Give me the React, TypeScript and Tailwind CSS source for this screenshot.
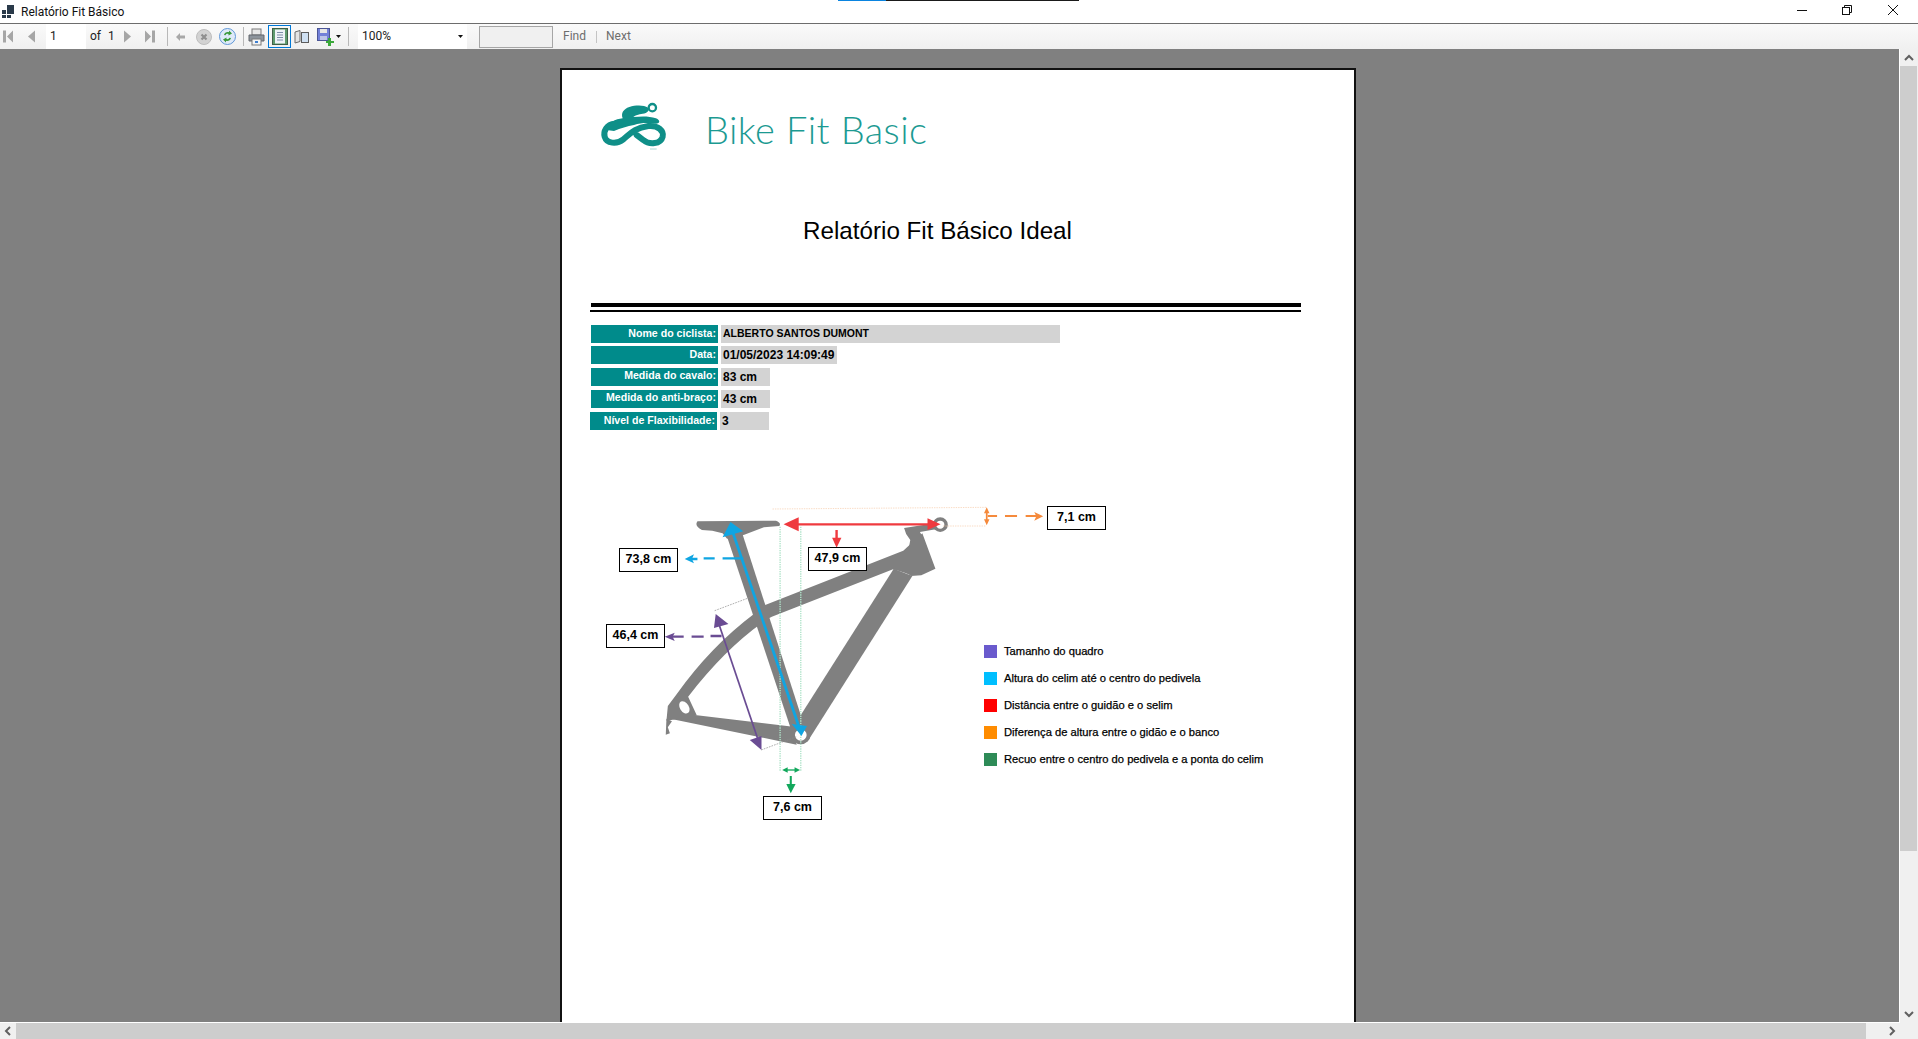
import React from 'react';

const sans = "font-['Liberation_Sans',Arial,sans-serif]";

function Chev({ d }: { d: string }) {
  return (
    <svg width="10" height="10" viewBox="0 0 10 10" fill="none" stroke="#606060" strokeWidth="2">
      <path d={d} />
    </svg>
  );
}

function Logo() {
  return (
    <svg width="90" height="60" viewBox="0 0 270 180" fill="none" className="shrink-0">
      <path d="M75 86 C48 88 40 110 44 125 C50 146 80 149 100 133 C120 117 132 99 175 93 C205 90 222 108 218 125 C212 148 178 150 160 135 L140 120" stroke="#0f8f88" strokeWidth="18" strokeLinecap="round" />
      <path d="M44 104 C56 84 76 72 98 70 C92 55 100 42 118 36 C138 30 162 30 174 38 C180 46 172 54 158 56 C146 58 136 60 130 66 C150 64 176 62 198 70 C212 76 210 86 198 86 C176 84 156 82 132 90 C112 94 92 100 72 108 Z" fill="#0f8f88" />
      <circle cx="187" cy="38" r="11" stroke="#0f8f88" strokeWidth="7" />
      <path d="M180 162 L200 162" stroke="#7cc4be" strokeWidth="2" />
    </svg>
  );
}

function Bike() {
  return (
    <svg width="540" height="340" viewBox="0 0 1568 1020" preserveAspectRatio="none" fill="none" className="absolute left-0 top-0">
      {/* frame */}
      <g fill="#808080">
        <path d="M312 94 L540 92 Q556 98 550 108 L505 112 L448 134 L398 146 L385 130 L355 122 L325 120 Q302 108 312 94 Z" />
        <path d="M398 140 L442 130 L614 682 L628 740 L585 722 Z" />
        <path d="M492 352 L915 180 L925 240 L880 238 L528 380 L505 392 Z" />
        <path d="M912 180 L965 130 L1003 236 L962 256 L932 258 Q925 250 880 238 Z" />
        <path d="M912 114 L1000 100 L1004 118 L958 126 L968 145 L925 178 L930 150 L918 132 Z" />
        <path d="M882 236 L936 258 L636 748 L608 682 Z" />
        <path d="M240 688 L262 670 L590 710 L600 764 Z" />
        <path d="M476 372 Q350 470 252 612 L226 648 L222 692 L236 690 L310 676 L285 620 Q390 480 498 400 Z" />
        <path d="M222 686 L220 734 L232 730 L226 712 L238 694 Z" />
        <circle cx="612" cy="735" r="28" />
      </g>
      <ellipse cx="274" cy="652" rx="13" ry="20" fill="#fff" transform="rotate(-30 274 652)" />
      <circle cx="612" cy="735" r="17" fill="#fff" />
      <circle cx="1017" cy="104" r="17" stroke="#808080" strokeWidth="10" fill="#fff" />
      {/* guides */}
      <path d="M530 57 L1150 52 M1025 108 L1150 108" stroke="#f6c9a8" strokeWidth="2" strokeDasharray="4 3" />
      <path d="M552 110 V845 M612 110 V845" stroke="#b0e4ca" strokeWidth="4" strokeDasharray="4 3" />
      <path d="M362 362 L465 322 M497 780 L600 740" stroke="#8a8a8a" strokeWidth="2" strokeDasharray="5 3" />
      {/* red */}
      <path d="M600 103 H985" stroke="#ef3a3f" strokeWidth="7" />
      <path d="M562 103 L606 82 V124 Z M1018 103 L980 85 V120 Z" fill="#ef3a3f" />
      <path d="M716 120 V150" stroke="#ef3a3f" strokeWidth="7" />
      <path d="M703 143 H730 L716 173 Z" fill="#ef3a3f" />
      {/* orange */}
      <path d="M1152 66 V92" stroke="#f58a3c" strokeWidth="5" />
      <path d="M1152 52 L1160 70 H1144 Z M1152 106 L1160 88 H1144 Z" fill="#f58a3c" />
      <path d="M1155 78 H1182 M1205 78 H1240 M1265 78 H1300" stroke="#f58a3c" strokeWidth="6" />
      <path d="M1316 79 L1290 66 L1296 79 L1290 92 Z" fill="#f58a3c" />
      {/* blue */}
      <path d="M414 125 L606 708" stroke="#0fa5e2" strokeWidth="8" />
      <path d="M408 96 L385 142 L445 124 Z M614 738 L586 702 L630 708 Z" fill="#0fa5e2" />
      <path d="M330 205 H362 M385 205 H445 M296 207 H312" stroke="#0fa5e2" strokeWidth="7" />
      <path d="M275 207 L302 193 L296 207 L302 220 Z" fill="#0fa5e2" />
      {/* purple */}
      <path d="M372 395 L490 755" stroke="#6a4c93" strokeWidth="5" />
      <path d="M365 372 L360 414 L402 402 Z M498 780 L464 750 L498 738 Z" fill="#6a4c93" />
      <path d="M238 440 H272 M295 440 H330 M350 438 H382" stroke="#6a4c93" strokeWidth="7" />
      <path d="M217 440 L246 428 L240 440 L246 453 Z" fill="#6a4c93" />
      {/* green */}
      <path d="M570 840 H600" stroke="#12a85c" strokeWidth="4" />
      <path d="M558 840 L574 832 V848 Z M610 840 L594 832 V848 Z" fill="#12a85c" />
      <path d="M583 858 V888" stroke="#12a85c" strokeWidth="6" />
      <path d="M570 882 H597 L583 910 Z" fill="#12a85c" />
    </svg>
  );
}

function Tag({ text, className }: { text: string; className: string }) {
  return (
    <div className={`absolute flex h-[24px] w-[59px] items-center justify-center border-[1.5px] border-black bg-white pb-[2px] text-[12.5px] font-bold text-black ${className}`}>
      {text}
    </div>
  );
}

const rows = [
  { label: 'Nome do ciclista:', value: 'ALBERTO SANTOS DUMONT', box: 'mt-0', l: 'w-[127px] ml-[29px] pb-px', v: 'w-[339px] ml-[3px] text-[10.5px] pb-px' },
  { label: 'Data:', value: '01/05/2023 14:09:49', box: 'mt-[3px]', l: 'w-[127px] ml-[29px] pb-px', v: 'w-[116px] ml-[3px] text-[12px]' },
  { label: 'Medida do cavalo:', value: '83 cm', box: 'mt-[4px]', l: 'w-[127px] ml-[29px] pb-[2px]', v: 'w-[49px] ml-[3px] text-[12px]' },
  { label: 'Medida do anti-braço:', value: '43 cm', box: 'mt-[4px]', l: 'w-[127px] ml-[29px] pb-[2px]', v: 'w-[49px] ml-[3px] text-[12px]' },
  { label: 'Nível de Flaxibilidade:', value: '3', box: 'mt-[4px]', l: 'w-[127px] ml-[28px]', v: 'w-[49px] ml-[3px] text-[12px]' },
];

const legend = [
  { c: 'bg-[#6a5acd]', t: 'Tamanho do quadro' },
  { c: 'bg-[#00bfff]', t: 'Altura do celim até o centro do pedivela' },
  { c: 'bg-[#ff0000]', t: 'Distância entre o guidão e o selim' },
  { c: 'bg-[#ff8c00]', t: 'Diferença de altura entre o gidão e o banco' },
  { c: 'bg-[#2e8b57]', t: 'Recuo entre o centro do pedivela e a ponta do celim' },
];

function Sep({ className }: { className: string }) {
  return <div className={`h-[19px] w-px shrink-0 bg-[#b8b8b8] ${className}`} />;
}

function Toolbar() {
  return (
    <div className="flex h-[25px] shrink-0 items-center bg-gradient-to-b from-[#fafafa] to-[#f0f0f0] text-[12px] font-['Roboto',sans-serif]">
      <svg width="10" height="13" viewBox="0 0 10 12" className="ml-[3px] shrink-0"><path d="M0 0H3V12H0Z M10 0V12L4 6Z" fill="#a6a6a6" /></svg>
      <svg width="8" height="13" viewBox="0 0 8 12" className="ml-[14px] shrink-0"><path d="M8 0V12L1 6Z" fill="#a6a6a6" /></svg>
      <div className="ml-[11px] flex h-full w-[40px] shrink-0 items-center bg-white pb-[2px] pl-[4px] text-[#222]">1</div>
      <div className="ml-[4px] w-[18px] shrink-0 pb-[2px] text-[#222]">of</div>
      <div className="w-[16px] shrink-0 pb-[2px] text-[#222]">1</div>
      <svg width="7" height="13" viewBox="0 0 7 12" className="shrink-0"><path d="M0 0V12L7 6Z" fill="#a6a6a6" /></svg>
      <svg width="10" height="13" viewBox="0 0 10 12" className="ml-[14px] shrink-0"><path d="M0 0V12L6 6Z M7 0H10V12H7Z" fill="#a6a6a6" /></svg>
      <Sep className="ml-[12px]" />
      <svg width="9" height="8" viewBox="0 0 9 8" className="ml-[8px] shrink-0"><path d="M0 4L4 0V2.5H9V5.5H4V8Z" fill="#a8a8a8" /></svg>
      <svg width="16" height="16" viewBox="0 0 16 16" className="ml-[11px] shrink-0">
        <circle cx="8" cy="8" r="7.5" fill="#d2d2d2" stroke="#bdbdbd" />
        <path d="M5.5 5.5L10.5 10.5M10.5 5.5L5.5 10.5" stroke="#8f8f8f" strokeWidth="2.2" />
      </svg>
      <svg width="17" height="17" viewBox="0 0 17 17" className="ml-[7px] shrink-0">
        <circle cx="8.5" cy="8.5" r="8" fill="#dfeaf8" stroke="#5f97d8" />
        <path d="M5 7C5.5 4.5 8 3.5 10 4.2V2.5L13 5.5L9.5 7.5V6C8 5.6 7 6.2 6.6 7.2Z" fill="#3a9a3a" />
        <path d="M12 10C11.5 12.5 9 13.5 7 12.8V14.5L4 11.5L7.5 9.5V11C9 11.4 10 10.8 10.4 9.8Z" fill="#3a9a3a" />
      </svg>
      <Sep className="ml-[7px]" />
      <svg width="17" height="18" viewBox="0 0 17 18" className="ml-[4px] shrink-0">
        <rect x="4" y="1" width="9" height="6" fill="#e8e8e8" stroke="#7a7a7a" />
        <path d="M1 7H16V13H1Z" fill="#8d949c" stroke="#62676d" />
        <rect x="4" y="11" width="9" height="6" fill="#f4f4f4" stroke="#7a7a7a" />
        <rect x="7" y="13" width="3" height="2" fill="#3f7fd0" />
      </svg>
      <div className="ml-[3px] flex h-[23px] w-[23px] shrink-0 items-center justify-center border border-[#0078d7]">
        <svg width="16" height="17" viewBox="0 0 16 17">
          <rect x="0.5" y="0.5" width="15" height="16" fill="#5e9a6e" stroke="#3f5f47" />
          <rect x="3" y="1.5" width="10" height="14" fill="#eef2f6" />
          <path d="M5 4.5H11M5 7H11M5 9.5H11M5 12H11" stroke="#7c8ca8" />
        </svg>
      </div>
      <svg width="15" height="14" viewBox="0 0 15 14" className="ml-[3px] shrink-0">
        <path d="M1 2L6 0.5V11.5L1 13Z" fill="#e4e4e4" stroke="#6b6b6b" />
        <rect x="7.5" y="2.5" width="7" height="10" fill="#cfe0f2" stroke="#5c5c5c" />
      </svg>
      <svg width="18" height="18" viewBox="0 0 18 18" className="ml-[8px] shrink-0">
        <rect x="0.5" y="0.5" width="12" height="12" fill="#7280d8" stroke="#4c5696" />
        <rect x="3" y="1" width="7" height="4" fill="#e6e6e6" />
        <rect x="3" y="8" width="7" height="4" fill="#bcc4e8" />
        <path d="M11 10H14V13H17V15H14V18H11V15H9V13H11Z" fill="#3aa83a" />
      </svg>
      <svg width="5" height="3" viewBox="0 0 5 3" className="ml-px shrink-0"><path d="M0 0H5L2.5 3Z" fill="#111" /></svg>
      <Sep className="ml-[7px]" />
      <div className="ml-[9px] flex h-full w-[109px] shrink-0 items-center justify-between bg-white pl-[4px] pr-[4px] text-[#222]">
        <span className="pb-[2px]">100%</span>
        <svg width="5" height="3" viewBox="0 0 5 3"><path d="M0 0H5L2.5 3Z" fill="#111" /></svg>
      </div>
      <div className="ml-[12px] h-[22px] w-[74px] shrink-0 border border-[#a6a6a6] bg-[#f0f0f0]" />
      <div className="ml-[10px] w-[23px] shrink-0 pb-[2px] text-[#6d6d6d]">Find</div>
      <div className="ml-[10px] h-[12px] w-px shrink-0 bg-[#c4c4c4]" />
      <div className="ml-[9px] shrink-0 pb-[2px] text-[#6d6d6d]">Next</div>
    </div>
  );
}

export default function App() {
  return (
    <div className="relative flex h-[1039px] w-[1918px] flex-col overflow-hidden bg-white">
      {/* title bar */}
      <div className="relative flex h-[23px] shrink-0 items-center text-[12px] text-[#111] font-['Roboto',sans-serif]">
        <div className="absolute left-[838px] top-0 h-px w-[48px] bg-[#0a84e0]" />
        <div className="absolute left-[886px] top-0 h-px w-[193px] bg-[#1a1a1a]" />
        <svg width="13" height="13" viewBox="0 0 13 13" className="ml-[2px] shrink-0">
          <path d="M0 5H4V9H0Z M0 10H4V13H0Z M5 10H9V13H5Z M5 0H12V9H5Z" fill="#2a3a4a" />
        </svg>
        <span className="ml-[6px]">Relatório Fit Básico</span>
        <div className="ml-auto mb-[3px] flex items-center">
          <svg width="10" height="10" viewBox="0 0 10 10" className="shrink-0"><path d="M0 5.5H10" stroke="#111" /></svg>
          <svg width="10" height="10" viewBox="0 0 10 10" className="ml-[35px] shrink-0" fill="none">
            <path d="M2.5 2.5V0.5H9.5V7.5H7.5" stroke="#111" />
            <rect x="0.5" y="2.5" width="7" height="7" stroke="#111" />
          </svg>
          <svg width="10" height="10" viewBox="0 0 10 10" className="ml-[36px] mr-[20px] shrink-0"><path d="M0 0L10 10M10 0L0 10" stroke="#111" /></svg>
        </div>
      </div>
      <div className="h-px shrink-0 bg-[#6d6d6d]" />
      <Toolbar />

      {/* work area */}
      <div className="flex min-h-0 flex-1">
        <div className="flex min-w-0 flex-1 flex-col">
          <div className={`min-h-0 flex-1 overflow-hidden border-b border-r border-white bg-[#808080] pl-[560px] pt-[19px] ${sans}`}>
            <div className="h-[1100px] w-[796px] border-2 border-[#111] bg-white">
              <div className="ml-[28px] mt-[25px] flex h-[60px] items-center">
                <Logo />
                <span className="ml-[25px] pt-[8px] font-['Lato',sans-serif] text-[38px] font-light leading-[52px] tracking-[0.4px] text-[#1c9a92]">Bike Fit Basic</span>
              </div>
              <div className="mt-[62px] w-[751px] text-center text-[24.2px] leading-[28px] text-black">Relatório Fit Básico Ideal</div>
              <div className="ml-[29px] mt-[58px] h-[4px] w-[710px] bg-black" />
              <div className="ml-[28px] mt-[3px] h-[2px] w-[711px] bg-black" />
              <div className="mt-[13px]">
                {rows.map((r) => (
                  <div key={r.label} className={`flex h-[18px] ${r.box}`}>
                    <div className={`flex items-center justify-end bg-[#008b8b] pr-[2px] text-[10.6px] font-bold text-white ${r.l}`}>{r.label}</div>
                    <div className={`flex items-center bg-[#d3d3d3] pl-[2px] font-bold text-black ${r.v}`}>{r.value}</div>
                  </div>
                ))}
              </div>
              <div className="ml-[28px] mt-[60px] flex">
                <div className="relative h-[340px] w-[394px] shrink-0">
                  <Bike />
                  <Tag text="7,1 cm" className="left-[457px] top-[16px]" />
                  <Tag text="73,8 cm" className="left-[29px] top-[58px]" />
                  <Tag text="47,9 cm" className="left-[218px] top-[57px]" />
                  <Tag text="46,4 cm" className="left-[16px] top-[134px]" />
                  <Tag text="7,6 cm" className="left-[173px] top-[306px]" />
                </div>
                <div className="mt-[155px] flex flex-col gap-[14px]">
                  {legend.map((l) => (
                    <div key={l.t} className="flex h-[13px] items-center text-[11.2px] text-black [-webkit-text-stroke:0.25px_black]">
                      <div className={`h-[13px] w-[13px] shrink-0 ${l.c}`} />
                      <span className="ml-[7px] whitespace-nowrap">{l.t}</span>
                    </div>
                  ))}
                </div>
              </div>
            </div>
          </div>
        </div>
        {/* vertical scrollbar */}
        <div className="flex w-[18px] shrink-0 flex-col bg-[#f0f0f0] pr-px">
          <div className="flex h-[17px] items-center justify-center"><Chev d="M1 7L5 3L9 7" /></div>
          <div className="h-[785px] bg-[#cdcdcd]" />
          <div className="flex-1" />
          <div className="flex h-[17px] items-center justify-center pb-[2px]"><Chev d="M1 3L5 7L9 3" /></div>
        </div>
      </div>

      {/* horizontal scrollbar */}
      <div className="flex h-[16px] shrink-0 bg-[#f0f0f0]">
        <div className="flex w-[16px] items-center justify-center"><Chev d="M7 1L3 5L7 9" /></div>
        <div className="w-[1850px] bg-[#cdcdcd]" />
        <div className="flex w-[52px] items-center justify-center"><Chev d="M3 1L7 5L3 9" /></div>
      </div>
    </div>
  );
}
